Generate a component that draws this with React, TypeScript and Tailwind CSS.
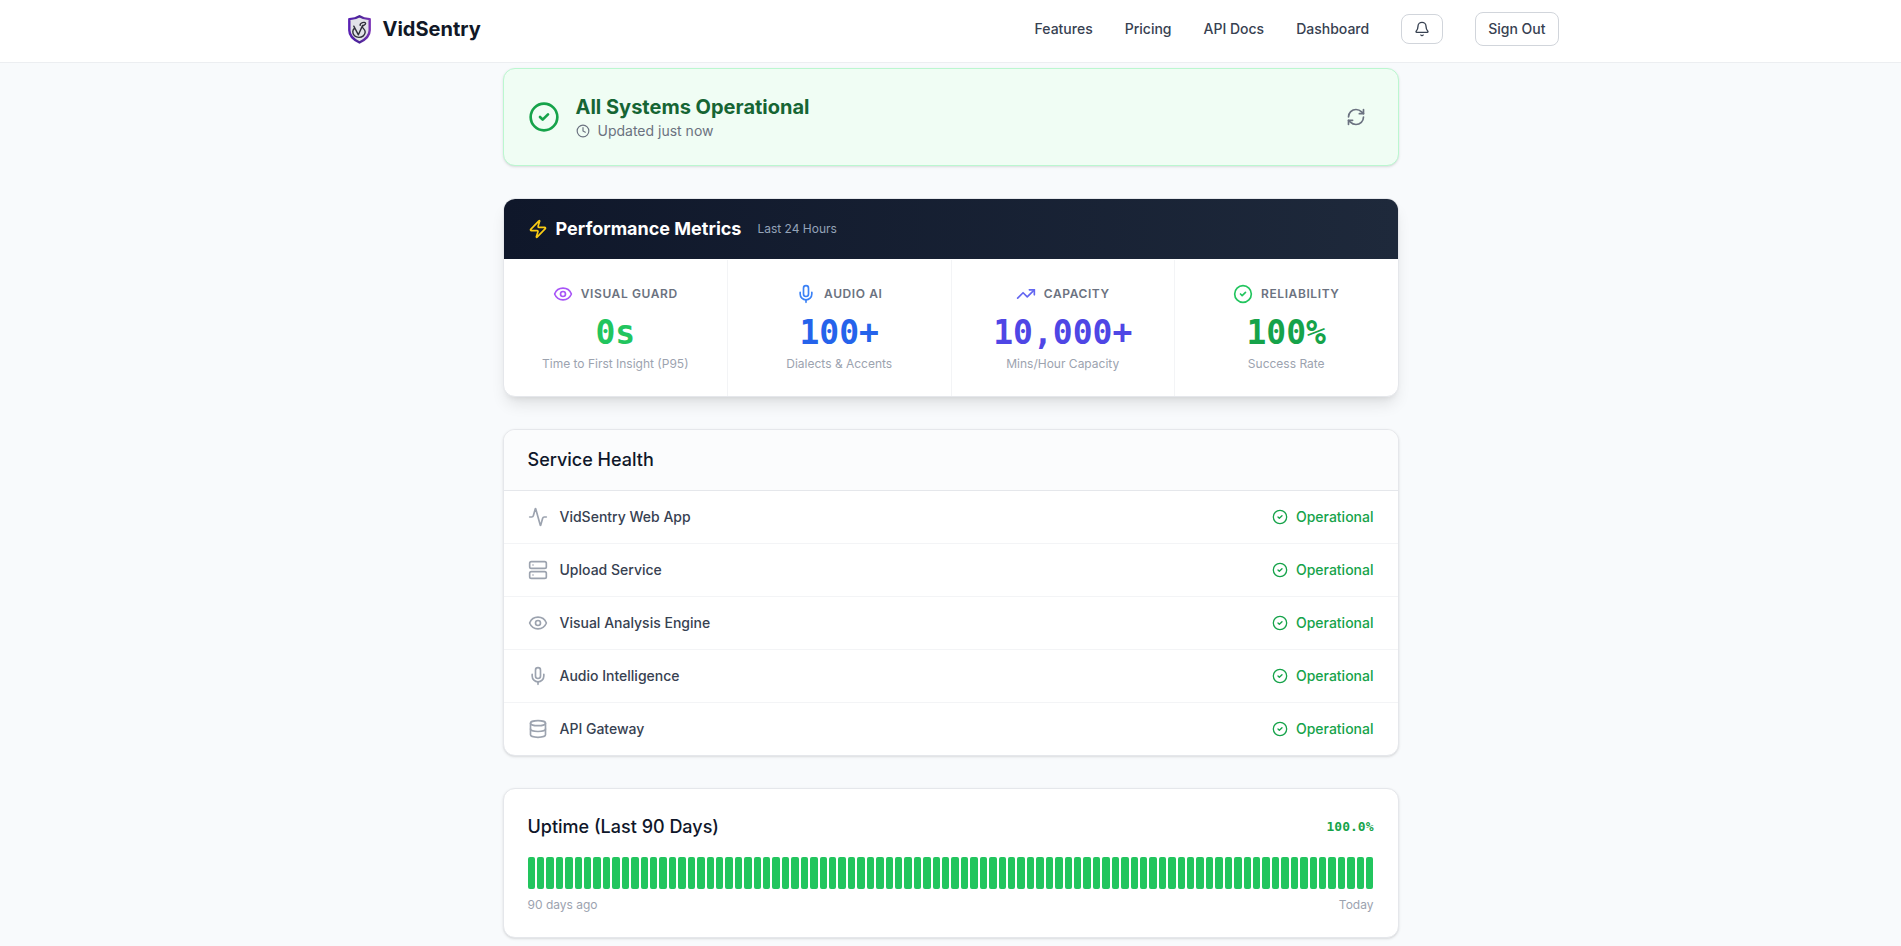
import {
  Activity,
  Bell,
  CircleCheck,
  Clock,
  Database,
  Eye,
  Mic,
  RefreshCw,
  Server,
  TrendingUp,
  Zap,
} from 'lucide-react';

const navLinks = ['Features', 'Pricing', 'API Docs', 'Dashboard'];

const metrics = [
  { icon: Eye, iconColor: 'text-[#a855f7]', label: 'Visual Guard', value: '0s', valueColor: 'text-[#22c55e]', note: 'Time to First Insight (P95)' },
  { icon: Mic, iconColor: 'text-[#3b82f6]', label: 'Audio AI', value: '100+', valueColor: 'text-[#2563eb]', note: 'Dialects & Accents' },
  { icon: TrendingUp, iconColor: 'text-[#6366f1]', label: 'Capacity', value: '10,000+', valueColor: 'text-[#4f46e5]', note: 'Mins/Hour Capacity' },
  { icon: CircleCheck, iconColor: 'text-[#22c55e]', label: 'Reliability', value: '100%', valueColor: 'text-[#16a34a]', note: 'Success Rate' },
];

const services = [
  { icon: Activity, name: 'VidSentry Web App' },
  { icon: Server, name: 'Upload Service' },
  { icon: Eye, name: 'Visual Analysis Engine' },
  { icon: Mic, name: 'Audio Intelligence' },
  { icon: Database, name: 'API Gateway' },
];

const days = Array.from({ length: 90 }, (_, i) => i);

function Logo() {
  return (
    <svg viewBox="0 0 32 32" className="w-8 h-8" fill="none" aria-hidden="true">
      <defs>
        <linearGradient id="shield" x1="5" y1="16" x2="28" y2="16" gradientUnits="userSpaceOnUse">
          <stop offset="0" stopColor="#5b21b6" />
          <stop offset="0.5" stopColor="#4a2496" />
          <stop offset="1" stopColor="#7e36b8" />
        </linearGradient>
      </defs>
      <path
        d="M16.5 3.2c3 1.9 6.500 2.700 10.200 2.900v11.200c0 5.700-4 9.300-10.200 12.200C10.300 26.600 6.300 23 6.300 17.300V6.100c3.700-.2 7.200-1 10.200-2.900Z"
        fill="#e2e3e8"
        stroke="url(#shield)"
        strokeWidth="2.4"
        strokeLinejoin="round"
      />
      <path
        d="M10.800 13.200l4.600 8.600 4.200-9.400M17.200 12.400c-.6-2.600 4.800-4.200 5.400-2 .3 1.600-2.400 1.700-3.200 3.200-.6 1.300 2.900 2.400 2.800 5.400-.1 3.100-2.800 5.400-6.200 5.400-3.700 0-6.300-2.500-6.200-5.600 0-1.500.6-2.700 1.600-3.600"
        stroke="#2f2f3a"
        strokeWidth="1.4"
        strokeLinecap="round"
        strokeLinejoin="round"
      />
    </svg>
  );
}

function Header() {
  return (
    <header className="bg-white border-b border-[#eceef1]">
      <div className="max-w-7xl mx-auto px-8 pt-3 pb-4 flex items-center justify-between">
        <a href="#" className="flex items-center gap-2">
          <Logo />
          <span className="text-xl font-bold text-[#111827]">VidSentry</span>
        </a>
        <nav className="flex items-center gap-8 text-sm font-medium text-[#374151]">
          {navLinks.map((link) => (
            <a key={link} href="#">
              {link}
            </a>
          ))}
          <button aria-label="Notifications" className="px-3 py-1.5 border border-[#d1d5db] rounded-lg">
            <Bell className="w-4 h-4" />
          </button>
          <button className="px-3 py-1.5 border border-[#d1d5db] rounded-lg">Sign Out</button>
        </nav>
      </div>
    </header>
  );
}

export default function App() {
  return (
    <div className="min-h-screen bg-[#f8fafc] font-['Inter',sans-serif] text-[#0f172a]">
      <Header />

      <main className="max-w-4xl mx-auto pt-[5px] pb-2 flex flex-col gap-8">
        {/* Overall status */}
        <section className="bg-[#f0fdf4] border border-[#bbf7d0] rounded-xl shadow-sm p-6 flex items-center justify-between">
          <div className="flex items-center gap-4">
            <CircleCheck className="w-8 h-8 text-[#16a34a]" />
            <div>
              <h1 className="text-xl font-bold text-[#166534]">All Systems Operational</h1>
              <p className="flex items-center gap-2 text-sm text-[#6b7280]">
                <Clock className="w-3.5 h-3.5" />
                Updated just now
              </p>
            </div>
          </div>
          <button aria-label="Refresh" className="p-2 text-[#6b7280]">
            <RefreshCw className="w-5 h-5" />
          </button>
        </section>

        {/* Performance metrics */}
        <section className="bg-white border border-[#e5e7eb] rounded-xl shadow-lg overflow-hidden">
          <div className="bg-gradient-to-r from-[#0f172a] to-[#1e293b] px-6 py-4 flex items-center gap-4">
            <h2 className="flex items-center gap-2 text-lg font-bold text-white">
              <Zap className="w-5 h-5 text-[#facc15]" />
              Performance Metrics
            </h2>
            <span className="text-xs text-[#94a3b8]">Last 24 Hours</span>
          </div>
          <div className="grid grid-cols-4 border-t border-white">
            {metrics.map((metric) => (
              <div key={metric.label} className="p-6 text-center border-l border-[#f3f4f6] first:border-l-0">
                <div className="flex items-center justify-center gap-2 mb-2">
                  <metric.icon className={`w-5 h-5 ${metric.iconColor}`} />
                  <span className="text-xs font-semibold uppercase tracking-wider text-[#6b7280]">{metric.label}</span>
                </div>
                <div className={`font-['DejaVu_Sans_Mono',monospace] text-[33px] leading-[42px] font-bold ${metric.valueColor}`}>
                  {metric.value}
                </div>
                <div className="mt-0.5 text-xs text-[#9ca3af]">{metric.note}</div>
              </div>
            ))}
          </div>
        </section>

        {/* Service health */}
        <section className="bg-white border border-[#e5e7eb] rounded-xl shadow-sm overflow-hidden">
          <div className="px-6 py-4 bg-[#fbfcfd] border-b border-[#e5e7eb]">
            <h2 className="text-lg font-medium">Service Health</h2>
          </div>
          <ul className="divide-y divide-[#f3f4f6]">
            {services.map((service) => (
              <li key={service.name} className="px-6 py-4 flex items-center justify-between text-sm font-medium">
                <div className="flex items-center gap-3 text-[#374151]">
                  <service.icon className="w-5 h-5 text-[#9ca3af]" />
                  {service.name}
                </div>
                <div className="flex items-center gap-2 text-[#16a34a]">
                  <CircleCheck className="w-4 h-4" />
                  Operational
                </div>
              </li>
            ))}
          </ul>
        </section>

        {/* Uptime */}
        <section className="bg-white border border-[#e5e7eb] rounded-xl shadow-sm p-6">
          <div className="flex items-center justify-between mb-4">
            <h2 className="text-lg font-medium">Uptime (Last 90 Days)</h2>
            <span className="font-['DejaVu_Sans_Mono',monospace] text-[13px] font-bold text-[#16a34a]">100.0%</span>
          </div>
          <div className="flex gap-[2px] h-8">
            {days.map((day) => (
              <div key={day} className="flex-1 bg-[#22c55e] rounded-xs" />
            ))}
          </div>
          <div className="mt-2 flex justify-between text-xs text-[#9ca3af]">
            <span>90 days ago</span>
            <span>Today</span>
          </div>
        </section>
      </main>
    </div>
  );
}
